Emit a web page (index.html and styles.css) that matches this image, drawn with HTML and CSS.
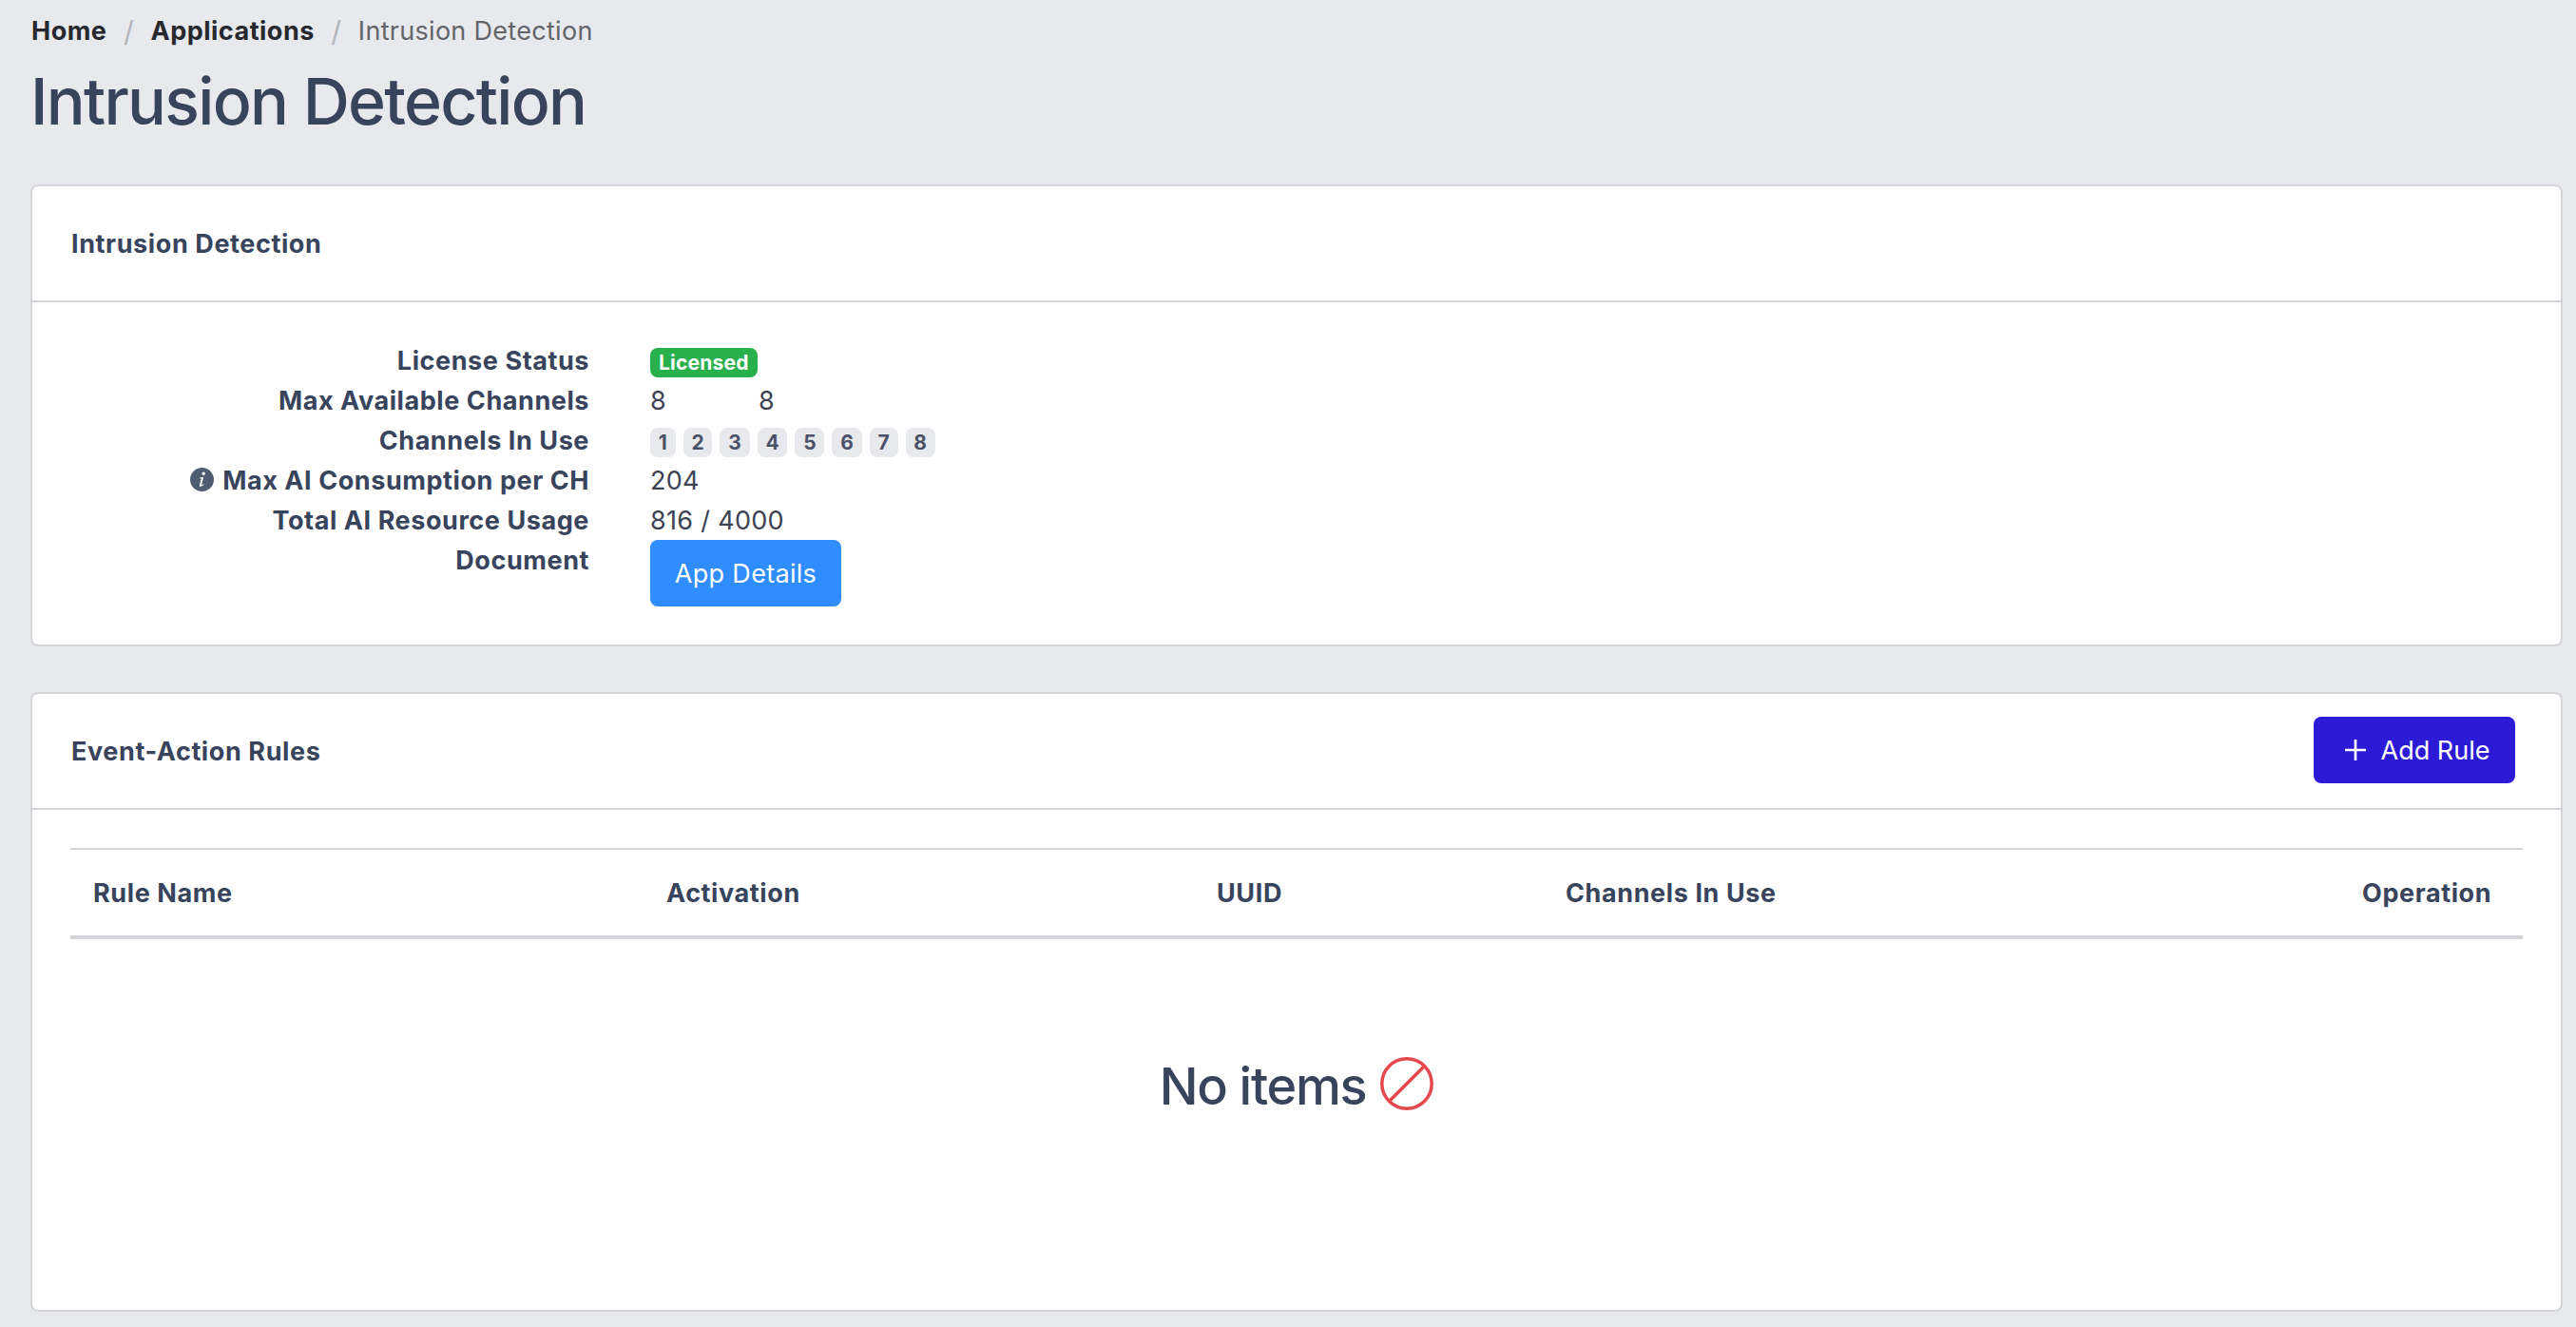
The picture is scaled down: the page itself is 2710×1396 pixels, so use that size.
FILE: index.html
```html
<!DOCTYPE html>
<html lang="en">
<head>
  <meta charset="UTF-8">
  <meta name="viewport" content="width=device-width, initial-scale=1.0">
  <title>Intrusion Detection</title>
  <link rel="stylesheet" href="styles.css">
</head>
<body>

  <nav class="breadcrumb">
    <a href="#">Home</a>
    <span class="separator">/</span>
    <a href="#">Applications</a>
    <span class="separator">/</span>
    <span class="current">Intrusion Detection</span>
  </nav>
  <h1>Intrusion Detection</h1>

  <section class="card">
    <header class="card-header">
      <h2>Intrusion Detection</h2>
    </header>
    <dl class="details">
      <dt>License Status</dt>
      <dd><span class="badge badge-success">Licensed</span></dd>
      <dt>Max Available Channels</dt>
      <dd class="channels-max"><span>8</span><span>8</span></dd>
      <dt>Channels In Use</dt>
      <dd class="channels">
        <span class="badge">1</span>
        <span class="badge">2</span>
        <span class="badge">3</span>
        <span class="badge">4</span>
        <span class="badge">5</span>
        <span class="badge">6</span>
        <span class="badge">7</span>
        <span class="badge">8</span>
      </dd>
      <dt>
        <svg class="icon-info" viewBox="0 0 24 24">
          <circle cx="12" cy="12" r="12" fill="#4f5d73"/>
          <circle cx="13.6" cy="6" r="1.6" fill="#fff"/>
          <path d="M9.2 10.2L13.6 9.4L11.5 17.2C11.3 18.2 12.2 17.8 13.6 16.4L14 16.9C12.4 19 9.2 20.2 9.5 17.6L11.2 11.4C11.3 10.8 10.4 10.8 9.2 10.8Z" fill="#fff"/>
        </svg>
        <span>Max AI Consumption per CH</span>
      </dt>
      <dd>204</dd>
      <dt>Total AI Resource Usage</dt>
      <dd>816 / 4000</dd>
      <dt>Document</dt>
      <dd><button class="btn btn-info">App Details</button></dd>
    </dl>
  </section>

  <section class="card card-rules">
    <header class="card-header">
      <h2>Event-Action Rules</h2>
      <button class="btn btn-primary">
        <svg class="icon-plus" viewBox="0 0 22 22">
          <path d="M11 0V22M0 11H22" stroke="#fff" stroke-width="2.7"/>
        </svg>
        <span>Add Rule</span>
      </button>
    </header>
    <div class="card-body">
      <table>
        <thead>
          <tr>
            <th class="col-name">Rule Name</th>
            <th class="col-activation">Activation</th>
            <th class="col-uuid">UUID</th>
            <th class="col-channels">Channels In Use</th>
            <th class="col-operation">Operation</th>
          </tr>
        </thead>
      </table>
      <div class="no-items">
        <span class="no-items-text">No items</span>
        <svg class="icon-ban" viewBox="0 0 56 56">
          <circle cx="28" cy="28" r="26.2" fill="none" stroke="#e5484d" stroke-width="3.5"/>
          <path d="M9.5 46.5L46.5 9.5" stroke="#e5484d" stroke-width="3.5"/>
        </svg>
      </div>
    </div>
  </section>

</body>
</html>
```

FILE: styles.css
```css
/* Global Reset */
* {
  margin: 0;
  padding: 0;
  box-sizing: border-box;
}

body {
  font-family: Inter, "Liberation Sans", sans-serif;
  font-size: 27px;
  line-height: 44px;
  letter-spacing: 0.3px;
  color: #38435c;
  background-color: #e8e9ed;
  min-height: 100vh;
  padding: 11px 14px 16px 32px;
}

/* Breadcrumb */
.breadcrumb {
  display: flex;
  height: 42px;
  padding-left: 1px;
}

.breadcrumb a {
  color: #26282e;
  font-weight: 700;
  letter-spacing: 0.5px;
  text-decoration: none;
}

.separator {
  width: 46px;
  text-align: center;
  font-size: 30px;
  color: #b3b5ba;
}

.current {
  color: #636469;
}

h1 {
  font-size: 68px;
  font-weight: 500;
  line-height: 84px;
  letter-spacing: -1.7px;
  margin: 11px 0 46px;
}

h2 {
  padding: 2px 0 0 1px;
  font-size: 27px;
  font-weight: 700;
  letter-spacing: 0.6px;
}

/* Cards */
.card {
  background-color: #fff;
  border: 2px solid #d3d5d8;
  border-radius: 8px;
  margin-bottom: 48px;
}

.card-header {
  display: flex;
  align-items: center;
  justify-content: space-between;
  height: 122px;
  padding: 0 48px 0 40px;
  border-bottom: 2px solid #d3d5d8;
}

/* License details */
.details {
  display: grid;
  grid-template-columns: 586px 1fr;
  grid-template-rows: repeat(5, 42px) 70px;
  column-gap: 64px;
  padding: 40px 0;
}

.details dt {
  display: flex;
  align-items: flex-start;
  justify-content: flex-end;
  font-weight: 700;
  letter-spacing: 0.57px;
}

.details dd {
  color: #3c4254;
}

.channels-max {
  display: flex;
}

.channels-max span {
  width: 114px;
}

.channels {
  display: flex;
  gap: 8px;
}

.badge {
  display: block;
  width: fit-content;
  height: 31px;
  margin-top: 8px;
  padding: 0 8.8px;
  border-radius: 8px;
  background-color: #e8e9ed;
  color: #4a5268;
  font-size: 21px;
  font-weight: 700;
  line-height: 31px;
  letter-spacing: 0;
}

.badge-success {
  padding: 0 9px;
  background-color: #28b04d;
  color: #fff;
  letter-spacing: 0.2px;
}

.icon-info {
  width: 25px;
  height: 25px;
  margin: 8px 9px 0 0;
}

/* Buttons */
.btn {
  display: flex;
  align-items: center;
  justify-content: center;
  height: 70px;
  border: 0;
  border-radius: 8px;
  color: #fff;
  font-family: inherit;
  font-size: 27px;
}

.btn-info {
  width: 201px;
  background-color: #2f8dff;
  letter-spacing: 0.3px;
}

.btn-primary {
  width: 212px;
  gap: 16px;
  margin-bottom: 2px;
  padding-left: 6px;
  background-color: #2b1bd7;
}

.icon-plus {
  width: 22px;
  height: 22px;
}

/* Rules table */
.card-rules {
  height: 652px;
  margin-bottom: 0;
}

.card-body {
  padding: 40px;
}

table {
  width: 100%;
  table-layout: fixed;
  border-spacing: 0;
}

th {
  height: 96px;
  padding: 2px 24px 0;
  border-top: 2px solid #d3d5d8;
  border-bottom: 4px solid #d3d5d8;
  font-weight: 700;
  letter-spacing: 0.6px;
  text-align: left;
}

.col-name {
  width: 603px;
}

.col-activation {
  width: 579px;
}

.col-uuid {
  width: 367px;
}

.col-channels {
  width: 838px;
}

.no-items {
  display: flex;
  align-items: center;
  justify-content: center;
  gap: 15px;
  margin-top: 112px;
  font-size: 54px;
  font-weight: 500;
  line-height: 80px;
}

.no-items-text {
  height: 80px;
  padding-top: 3px;
  letter-spacing: -1.3px;
}

.icon-ban {
  width: 56px;
  height: 56px;
}
```
